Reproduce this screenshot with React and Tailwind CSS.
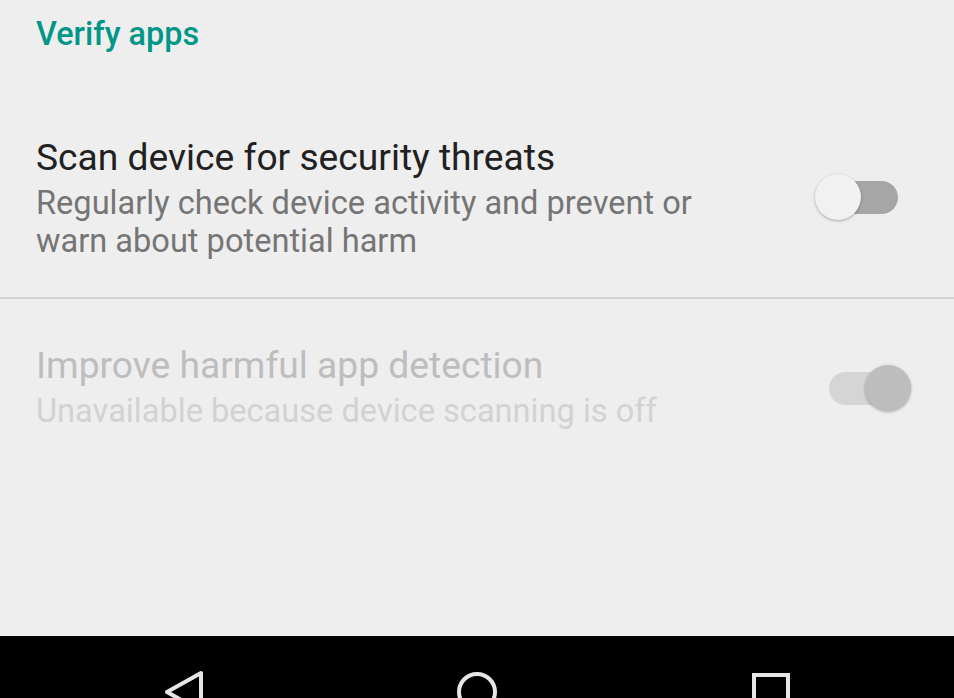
function Toggle({ on, disabled }) {
  const track = disabled ? 'bg-[#d5d5d5]' : 'bg-[#a6a6a6]'
  const thumb = disabled ? 'bg-[#bdbdbd]' : 'bg-[#f1f1f1]'
  return (
    <div className="relative h-[46px] w-[96px] shrink-0">
      <div className={`absolute left-[14px] top-[7px] h-[33px] w-[69px] rounded-full ${track}`} />
      <div
        className={`absolute top-0 h-[46px] w-[46px] rounded-full ${thumb} shadow-[0_1px_3px_rgba(0,0,0,0.3)] ${
          on ? 'left-[50px]' : 'left-0'
        }`}
      />
    </div>
  )
}

function SettingRow({ title, summary, disabled, children }) {
  return (
    <div className="flex items-center justify-between pl-[36px] pr-[43px]">
      <div>
        <div
          className={`text-[37.2px] leading-[40px] ${disabled ? 'text-[#bdbdbd]' : 'text-[#212121]'}`}
        >
          {title}
        </div>
        <div
          className={`mt-[7px] text-[32.6px] leading-[38px] ${disabled ? 'text-[#d2d2d2]' : 'text-[#757575]'}`}
        >
          {summary}
        </div>
      </div>
      {children}
    </div>
  )
}

export default function App() {
  return (
    <div className="flex h-[698px] w-[954px] flex-col overflow-hidden bg-[#eeeeee] font-['Roboto',sans-serif]">
      <div className="h-[636px] shrink-0">
        <div className="pl-[36px] pt-[18px] text-[32.4px] font-medium leading-[32px] text-[#009688]">
          Verify apps
        </div>

        <div className="mt-[87px]">
          <SettingRow
            title="Scan device for security threats"
            summary={
              <>
                Regularly check device activity and prevent or
                <br />
                warn about potential harm
              </>
            }
          >
            <div className="-mt-[4px]">
              <Toggle on={false} />
            </div>
          </SettingRow>
        </div>

        <div className="mt-[37px] h-[2px] bg-[#d3d3d3]" />

        <div className="mt-[46px]">
          <SettingRow
            title="Improve harmful app detection"
            summary="Unavailable because device scanning is off"
            disabled
          >
            <div className="mt-0">
              <Toggle on disabled />
            </div>
          </SettingRow>
        </div>
      </div>

      <nav className="flex h-[112px] shrink-0 items-center gap-[250px] bg-black pl-[161px]">
        <svg width="44" height="44" viewBox="0 0 44 44" fill="none" stroke="#e6e6e6" strokeWidth="4" strokeLinejoin="round">
          <polygon points="40,3 40,41 6,22" />
        </svg>
        <svg width="44" height="44" viewBox="0 0 44 44" fill="none" stroke="#e6e6e6" strokeWidth="4">
          <circle cx="22" cy="22" r="18" />
        </svg>
        <svg width="44" height="44" viewBox="0 0 44 44" fill="none" stroke="#e6e6e6" strokeWidth="4">
          <rect x="5" y="5" width="34" height="34" />
        </svg>
      </nav>
    </div>
  )
}
